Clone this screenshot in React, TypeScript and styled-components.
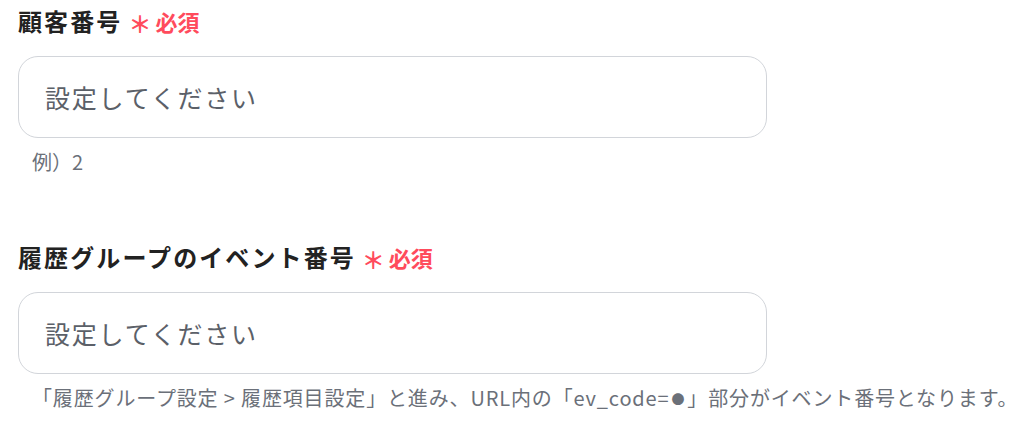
import React, { ReactNode } from "react";
import styled, { createGlobalStyle } from "styled-components";

const GlobalStyle = createGlobalStyle`
	* {
		box-sizing: border-box;
	}

	body {
		margin: 0;
		background: #ffffff;
		font-family: "Noto Sans CJK JP", "Noto Sans", sans-serif;
	}
`;

type FieldProps = {
	label: string;
	hint: ReactNode;
	wide?: boolean;
};

function Field({ label, hint, wide }: FieldProps) {
	return (
		<FieldBox>
			<Label>
				<span>{label}</span>
				<Required>
					<Asterisk>＊</Asterisk>必須
				</Required>
			</Label>
			<Input type="text" placeholder="設定してください" />
			<Hint $wide={wide}>{hint}</Hint>
		</FieldBox>
	);
}

export default function App() {
	return (
		<>
			<GlobalStyle />
			<Form>
				<Field label="顧客番号" hint="例）2" />
				<Field
					label="履歴グループのイベント番号"
					wide
					hint={
						<>
							「履歴グループ設定 &gt; 履歴項目設定」と進み、URL内の「ev_code=<Dot>●</Dot>」部分がイベント番号となります。
						</>
					}
				/>
			</Form>
		</>
	);
}

const Form = styled.div`
	display: flex;
	flex-direction: column;
	gap: 63px;
	padding: 3px 0 0 18px;
`;

const FieldBox = styled.div`
	display: flex;
	flex-direction: column;
`;

const Label = styled.div`
	display: flex;
	align-items: center;
	gap: 6px;
	height: 34px;
	font-size: 24px;
	font-weight: 700;
	letter-spacing: 2.1px;
	color: #222222;
`;

const Required = styled.span`
	display: flex;
	align-items: center;
	font-size: 22px;
	font-weight: 700;
	letter-spacing: 0;
	color: #ff4b5c;
	margin-top: 2px;
`;

const Asterisk = styled.span`
	font-size: 23px;
	margin-right: 4px;
	transform: translateY(2px);
`;

const Input = styled.input`
	margin-top: 19px;
	width: 749px;
	height: 82px;
	padding: 0 26px;
	border: 1px solid #d2d5da;
	border-radius: 20px;
	background: #ffffff;
	font-family: inherit;
	font-size: 25px;
	letter-spacing: 1.8px;
	color: #333333;
	outline: none;

	&::placeholder {
		color: #5b6068;
	}
`;

const Hint = styled.div<{ $wide?: boolean }>`
	margin-top: 10px;
	padding-left: 14px;
	line-height: 28px;
	font-size: 20px;
	letter-spacing: ${(p) => (p.$wide ? "0.85px" : "0")};
	color: #6b7079;
`;

const Dot = styled.span`
	font-size: 13px;
	vertical-align: 2px;
	margin: 0 2px;
`;
